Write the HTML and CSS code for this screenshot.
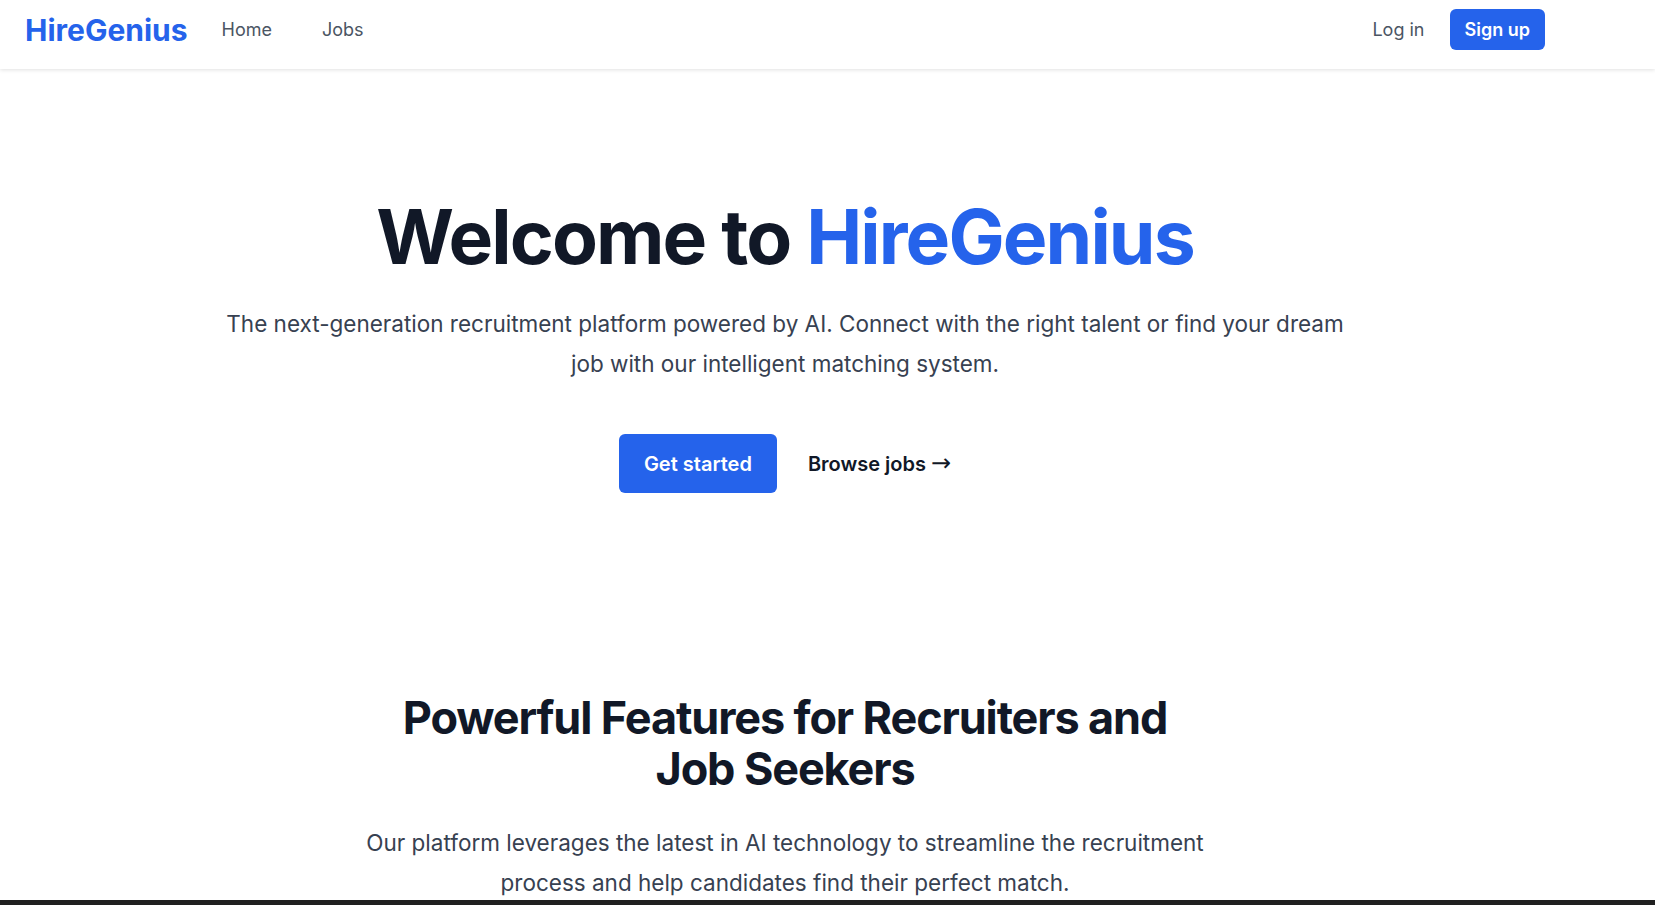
FILE: index.html
```html
<!DOCTYPE html>
<html lang="en">
<head>
<meta charset="utf-8">
<title>HireGenius</title>
<link rel="stylesheet" href="styles.css">
</head>
<body>
<header class="nav">
  <div class="nav-left">
    <a class="logo" href="#">HireGenius</a>
    <nav class="links">
      <a href="#">Home</a>
      <a href="#">Jobs</a>
    </nav>
  </div>
  <div class="nav-right">
    <a class="login" href="#">Log in</a>
    <a class="signup" href="#">Sign up</a>
  </div>
</header>
<main class="page">
  <section class="hero">
    <h1 class="hero-title">Welcome to <span class="brand">HireGenius</span></h1>
    <p class="hero-text">The next-generation recruitment platform powered by AI. Connect with the right talent or find your dream job with our intelligent matching system.</p>
    <div class="actions">
      <a class="primary" href="#">Get started</a>
      <a class="secondary" href="#">Browse jobs <span class="arrow">→</span></a>
    </div>
  </section>
  <section class="features">
    <h2 class="features-title">Powerful Features for Recruiters and Job Seekers</h2>
    <p class="features-text">Our platform leverages the latest in AI technology to streamline the recruitment process and help candidates find their perfect match.</p>
  </section>
</main>
<div class="bottom-bar"></div>
</body>
</html>
```

FILE: styles.css
```css
* { box-sizing: border-box; }
html, body { margin: 0; padding: 0; }
body {
  font-family: Inter, "Noto Sans", sans-serif;
  background: #ffffff;
  color: #111827;
}
a { text-decoration: none; }
.nav {
  height: 69px;
  display: flex;
  align-items: center;
  justify-content: space-between;
  padding: 0 110px 10px 25px;
  background: #fff;
  box-shadow: 0 1px 4px rgba(0,0,0,0.12);
  position: relative;
}
.nav-left { display: flex; align-items: center; }
.logo {
  font-size: 30px;
  font-weight: 700;
  color: #2563eb;
  margin-right: 34px;
}
.links { display: flex; gap: 50px; }
.links a, .login {
  font-size: 18px;
  color: #4b5563;
}
.nav-right { display: flex; align-items: center; gap: 25px; }
.signup {
  background: #2563eb;
  color: #fff;
  font-size: 18px;
  font-weight: 600;
  height: 41px;
  padding: 0 15px;
  display: flex;
  align-items: center;
  border-radius: 6px;
}
.page { width: 1570px; padding-bottom: 40px; }
.hero {
  display: flex;
  flex-direction: column;
  align-items: center;
  padding-top: 130px;
}
.hero-title {
  margin: 0;
  font-size: 75px;
  line-height: 1;
  font-weight: 700;
  letter-spacing: -0.025em;
  color: #111827;
}
.brand { color: #2563eb; }
.hero-text {
  margin: 30px 0 0;
  max-width: 1150px;
  text-align: center;
  font-size: 22.5px;
  line-height: 40px;
  color: #374151;
}
.actions {
  margin-top: 50px;
  display: flex;
  align-items: center;
  gap: 31px;
}
.primary {
  background: #2563eb;
  color: #fff;
  font-size: 20px;
  font-weight: 600;
  height: 59px;
  padding: 0 25px;
  display: flex;
  align-items: center;
  border-radius: 6px;
}
.secondary {
  font-size: 20px;
  font-weight: 600;
  color: #111827;
}
.arrow {
  font-family: "DejaVu Sans", sans-serif;
  font-size: 24px;
  font-weight: 400;
  line-height: 1;
}
.features {
  display: flex;
  flex-direction: column;
  align-items: center;
  padding-top: 199px;
}
.features-title {
  margin: 0;
  max-width: 768px;
  text-align: center;
  font-size: 45px;
  line-height: 51px;
  font-weight: 700;
  letter-spacing: -0.025em;
  color: #111827;
}
.features-text {
  margin: 29px 0 0;
  max-width: 896px;
  text-align: center;
  font-size: 22.5px;
  line-height: 40px;
  color: #374151;
}
.bottom-bar {
  position: fixed;
  left: 0;
  right: 0;
  bottom: 0;
  height: 5px;
  background: #202020;
}
```
